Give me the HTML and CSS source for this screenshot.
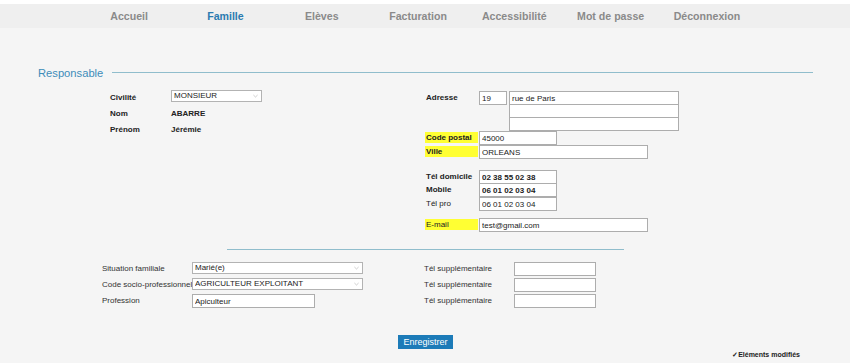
FILE: index.html
```html
<!DOCTYPE html>
<html lang="fr">
<head>
    <meta charset="UTF-8">
    <meta name="viewport" content="width=device-width, initial-scale=1.0">
    <title>Famille - Responsable</title>
    <link rel="stylesheet" href="styles.css">
</head>
<body>
    <header class="topbar">
        <nav class="menu">
            <a class="menu-item">Accueil</a>
            <a class="menu-item active">Famille</a>
            <a class="menu-item">Elèves</a>
            <a class="menu-item">Facturation</a>
            <a class="menu-item">Accessibilité</a>
            <a class="menu-item">Mot de passe</a>
            <a class="menu-item">Déconnexion</a>
        </nav>
    </header>

    <main class="page">
        <div class="section-title">
            <h2>Responsable</h2>
            <span class="rule"></span>
        </div>

        <div class="identity">
            <div class="ident-left">
                <span class="lbl bold">Civilité</span>
                <div class="select-wrap civ">
                    <select class="field-select"><option>MONSIEUR</option></select>
                    <svg class="chevron" viewBox="0 0 6 4"><path d="M0.5 0.8 L3 3.2 L5.5 0.8" fill="none" stroke="#aaa" stroke-width="0.7"/></svg>
                </div>
                <span class="lbl bold">Nom</span>
                <span class="val">ABARRE</span>
                <span class="lbl bold">Prénom</span>
                <span class="val">Jérémie</span>
            </div>

            <div class="ident-right">
                <div class="row">
                    <span class="rlbl bold">Adresse</span>
                    <input class="field num" value="19">
                    <div class="street">
                        <input class="field wide" value="rue de Paris">
                        <input class="field wide" value="">
                        <input class="field wide" value="">
                    </div>
                </div>
                <div class="row">
                    <span class="rlbl bold mark">Code postal</span>
                    <input class="field short" value="45000">
                </div>
                <div class="row">
                    <span class="rlbl bold mark">Ville</span>
                    <input class="field long" value="ORLEANS">
                </div>
                <div class="row gap-phone">
                    <span class="rlbl bold">Tél domicile</span>
                    <input class="field short strong" value="02 38 55 02 38">
                </div>
                <div class="row stacked">
                    <span class="rlbl bold">Mobile</span>
                    <input class="field short strong" value="06 01 02 03 04">
                </div>
                <div class="row">
                    <span class="rlbl">Tél pro</span>
                    <input class="field short" value="06 01 02 03 04">
                </div>
                <div class="row gap-mail">
                    <span class="rlbl mark">E-mail</span>
                    <input class="field long" value="test@gmail.com">
                </div>
            </div>
        </div>

        <div class="divider"></div>

        <div class="extra">
            <div class="extra-left">
                <span class="xlbl">Situation familiale</span>
                <div class="select-wrap wide-select">
                    <select class="field-select"><option>Marié(e)</option></select>
                    <svg class="chevron" viewBox="0 0 6 4"><path d="M0.5 0.8 L3 3.2 L5.5 0.8" fill="none" stroke="#aaa" stroke-width="0.7"/></svg>
                </div>
                <span class="xlbl">Code socio-professionnel</span>
                <div class="select-wrap wide-select">
                    <select class="field-select"><option>AGRICULTEUR EXPLOITANT</option></select>
                    <svg class="chevron" viewBox="0 0 6 4"><path d="M0.5 0.8 L3 3.2 L5.5 0.8" fill="none" stroke="#aaa" stroke-width="0.7"/></svg>
                </div>
                <span class="xlbl">Profession</span>
                <input class="field job" value="Apiculteur">
            </div>
            <div class="extra-right">
                <span class="xlbl">Tél supplémentaire</span>
                <input class="field extra-tel" value="">
                <span class="xlbl">Tél supplémentaire</span>
                <input class="field extra-tel" value="">
                <span class="xlbl">Tél supplémentaire</span>
                <input class="field extra-tel" value="">
            </div>
        </div>

        <div class="actions">
            <button class="save">Enregistrer</button>
        </div>

        <div class="note">✓Eléments modifiés</div>
    </main>
</body>
</html>
```

FILE: styles.css
```css
* {
    margin: 0;
    padding: 0;
    box-sizing: border-box;
}

body {
    font-family: "Liberation Sans", Arial, sans-serif;
    background: #f5f5f5;
    color: #222;
    font-size: 8px;
}

/* top menu */
.topbar {
    border-top: 4px solid #fff;
    background: #efefef;
    height: 28px;
}

.menu {
    display: flex;
    padding-left: 81px;
    height: 24px;
    align-items: center;
}

.menu-item {
    width: 96.3px;
    text-align: center;
    font-size: 10.6px;
    font-weight: bold;
    color: #8a8a8a;
    cursor: pointer;
}

.menu-item.active {
    color: #2b7bb0;
}

/* section header */
.section-title {
    display: flex;
    align-items: center;
    margin: 38px 37px 0 38px;
    height: 14px;
}

.section-title h2 {
    font-size: 11.2px;
    font-weight: normal;
    color: #3d8cb9;
    line-height: 14px;
}

.rule {
    flex: 1;
    height: 1px;
    margin-left: 9px;
    margin-top: -2px;
    background: #90bdcc;
}

.bold {
    font-weight: bold;
}

/* identity block */
.identity {
    display: flex;
    margin-top: 10px;
}

.ident-left {
    margin-left: 110px;
    width: 315px;
    display: grid;
    grid-template-columns: 61px auto;
    grid-auto-rows: 16px;
    align-content: start;
}

.lbl, .val {
    line-height: 16px;
}

.val {
    font-weight: bold;
}

.select-wrap {
    position: relative;
    height: 12px;
}

.select-wrap.civ {
    width: 91px;
}

.field-select {
    appearance: none;
    -webkit-appearance: none;
    width: 100%;
    height: 12px;
    border: 1px solid #b3b3b3;
    background: #fff;
    font-family: inherit;
    font-size: 8px;
    padding: 0 2px;
    color: #222;
    line-height: 10px;
}

.chevron {
    position: absolute;
    right: 4px;
    top: 4px;
    width: 5px;
    height: 4px;
}

.ident-right {
    padding-top: 1px;
}

.row {
    display: flex;
    align-items: flex-start;
}

.rlbl {
    width: 53px;
    margin-right: 1px;
    margin-top: 1px;
    line-height: 11px;
    padding-left: 1px;
    white-space: nowrap;
}

.rlbl.mark {
    background: #ffff33;
}

.field {
    height: 14px;
    border: 1px solid #adadad;
    background: #fff;
    font-family: inherit;
    font-size: 8px;
    padding: 0 2px;
    color: #222;
}

.field.strong {
    font-weight: bold;
}

.num {
    width: 28px;
}

.street {
    display: flex;
    flex-direction: column;
    margin-left: 2px;
}

.street .field + .field {
    margin-top: -1px;
}

.wide {
    width: 170px;
}

.short {
    width: 78px;
}

.long {
    width: 169px;
}

.gap-phone {
    margin-top: 11px;
}

.stacked {
    margin-top: -1px;
}

.gap-mail {
    margin-top: 7px;
}

.divider {
    width: 397px;
    height: 1px;
    background: #90bdcc;
    margin: 17px auto 0;
}

/* extra block */
.extra {
    display: flex;
    margin-top: 12px;
}

.extra-left, .extra-right {
    display: grid;
    grid-template-columns: 90px auto;
    grid-auto-rows: 16px;
    align-content: start;
}

.extra-left {
    margin-left: 102px;
    width: 322px;
}

.xlbl {
    line-height: 14px;
    white-space: nowrap;
    color: #333;
}

.wide-select {
    width: 171px;
}

.job {
    width: 123px;
}

.extra-tel {
    width: 82px;
}

.actions {
    display: flex;
    justify-content: center;
    margin-top: 25px;
    padding-left: 1px;
}

.save {
    width: 55px;
    height: 14px;
    background: #1c7bb8;
    border: none;
    color: #fff;
    font-family: inherit;
    font-size: 9px;
    line-height: 14px;
    cursor: pointer;
}

.note {
    text-align: right;
    padding-right: 50px;
    margin-top: 1px;
    font-size: 7px;
    font-weight: bold;
    line-height: 10px;
}
```
